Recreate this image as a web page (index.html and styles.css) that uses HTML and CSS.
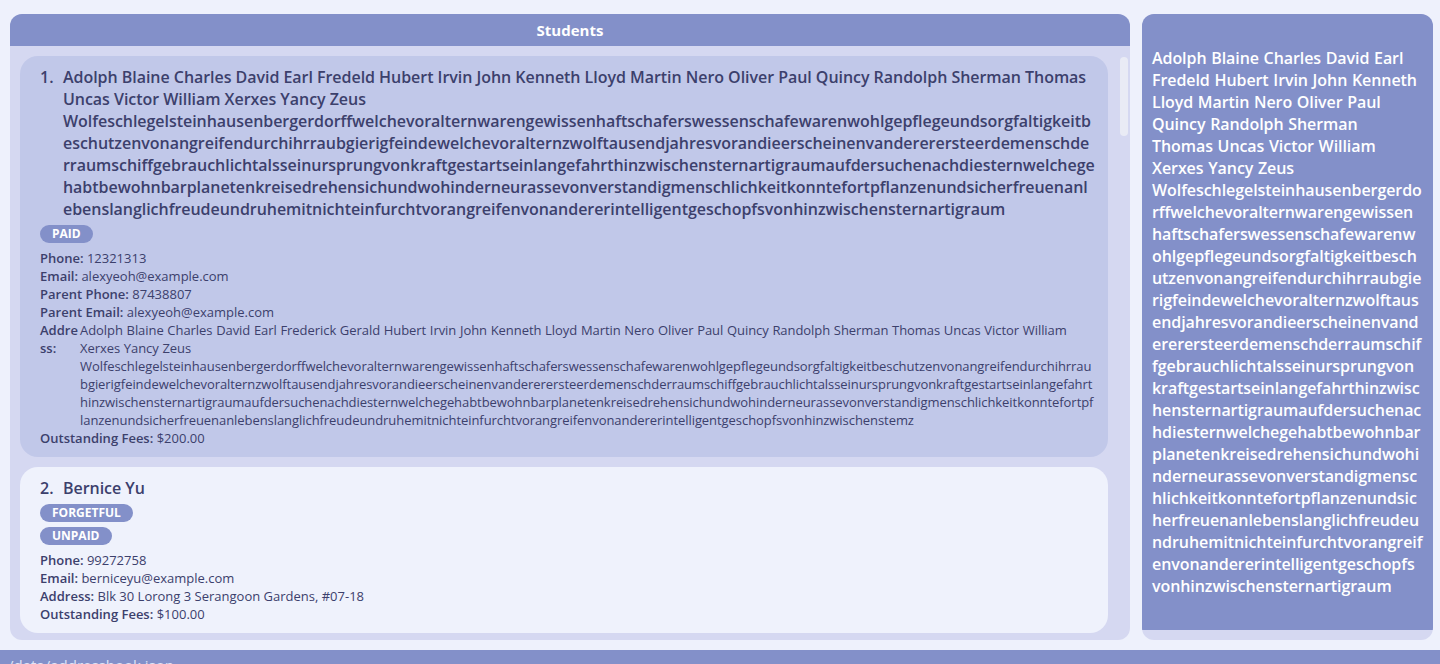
FILE: index.html
```html
<!DOCTYPE html>
<html>
<head>
<meta charset="utf-8">
<link rel="stylesheet" href="styles.css">
</head>
<body>
<div class="main">
  <section class="list-panel">
    <div class="list-header">Students</div>
    <div class="list-body">
      <div class="card card-selected">
        <div class="name-row">
          <span class="index">1.</span>
          <span class="name">Adolph Blaine Charles David Earl Fredeld Hubert Irvin John Kenneth Lloyd Martin Nero Oliver Paul Quincy Randolph Sherman Thomas Uncas Victor William Xerxes Yancy Zeus Wolfeschlegelsteinhausenbergerdorffwelchevoralternwarengewissenhaftschaferswessenschafewarenwohlgepflegeundsorgfaltigkeitbeschutzenvonangreifendurchihrraubgierigfeindewelchevoralternzwolftausendjahresvorandieerscheinenvandererersteerdemenschderraumschiffgebrauchlichtalsseinursprungvonkraftgestartseinlangefahrthinzwischensternartigraumaufdersuchenachdiesternwelchegehabtbewohnbarplanetenkreisedrehensichundwohinderneurassevonverstandigmenschlichkeitkonntefortpflanzenundsicherfreuenanlebenslanglichfreudeundruhemitnichteinfurchtvorangreifenvonandererintelligentgeschopfsvonhinzwischensternartigraum</span>
        </div>
        <div class="tags">
          <span class="tag">PAID</span>
        </div>
        <div class="details">
          <div class="row"><b>Phone:</b> 12321313</div>
          <div class="row"><b>Email:</b> alexyeoh@example.com</div>
          <div class="row"><b>Parent Phone:</b> 87438807</div>
          <div class="row"><b>Parent Email:</b> alexyeoh@example.com</div>
          <div class="row row-squeezed"><b class="squeezed-label">Address:</b><span class="squeezed-value">Adolph Blaine Charles David Earl Frederick Gerald Hubert Irvin John Kenneth Lloyd Martin Nero Oliver Paul Quincy Randolph Sherman Thomas Uncas Victor William Xerxes Yancy Zeus Wolfeschlegelsteinhausenbergerdorffwelchevoralternwarengewissenhaftschaferswessenschafewarenwohlgepflegeundsorgfaltigkeitbeschutzenvonangreifendurchihrraubgierigfeindewelchevoralternzwolftausendjahresvorandieerscheinenvandererersteerdemenschderraumschiffgebrauchlichtalsseinursprungvonkraftgestartseinlangefahrthinzwischensternartigraumaufdersuchenachdiesternwelchegehabtbewohnbarplanetenkreisedrehensichundwohinderneurassevonverstandigmenschlichkeitkonntefortpflanzenundsicherfreuenanlebenslanglichfreudeundruhemitnichteinfurchtvorangreifenvonandererintelligentgeschopfsvonhinzwischenstemz</span></div>
          <div class="row"><b>Outstanding Fees:</b> $200.00</div>
        </div>
      </div>
      <div class="card">
        <div class="name-row">
          <span class="index">2.</span>
          <span class="name">Bernice Yu</span>
        </div>
        <div class="tags">
          <span class="tag">FORGETFUL</span>
          <span class="tag">UNPAID</span>
        </div>
        <div class="details">
          <div class="row"><b>Phone:</b> 99272758</div>
          <div class="row"><b>Email:</b> berniceyu@example.com</div>
          <div class="row"><b>Address:</b> Blk 30 Lorong 3 Serangoon Gardens, #07-18</div>
          <div class="row"><b>Outstanding Fees:</b> $100.00</div>
        </div>
      </div>
      <div class="scrollbar"></div>
    </div>
  </section>
  <aside class="result-panel">
    <div class="result-box">
      <p class="result-text">Adolph Blaine Charles David Earl Fredeld Hubert Irvin John Kenneth Lloyd Martin Nero Oliver Paul Quincy Randolph Sherman Thomas Uncas Victor William Xerxes Yancy Zeus Wolfeschlegelsteinhausenbergerdorffwelchevoralternwarengewissenhaftschaferswessenschafewarenwohlgepflegeundsorgfaltigkeitbeschutzenvonangreifendurchihrraubgierigfeindewelchevoralternzwolftausendjahresvorandieerscheinenvandererersteerdemenschderraumschiffgebrauchlichtalsseinursprungvonkraftgestartseinlangefahrthinzwischensternartigraumaufdersuchenachdiesternwelchegehabtbewohnbarplanetenkreisedrehensichundwohinderneurassevonverstandigmenschlichkeitkonntefortpflanzenundsicherfreuenanlebenslanglichfreudeundruhemitnichteinfurchtvorangreifenvonandererintelligentgeschopfsvonhinzwischensternartigraum</p>
    </div>
  </aside>
</div>
<footer class="status-bar">/data/addressbook.json</footer>
</body>
</html>
```

FILE: styles.css
```css
* { box-sizing: border-box; }

html, body {
  margin: 0;
  padding: 0;
}

body {
  width: 1440px;
  height: 664px;
  overflow: hidden;
  background: #eef1fc;
  font-family: "Open Sans", "Liberation Sans", sans-serif;
  color: #3c406c;
}

.main {
  display: flex;
  gap: 12px;
  height: 640px;
  padding: 14px 7px 0 10px;
}

.list-panel {
  width: 1120px;
  display: flex;
  flex-direction: column;
  border-radius: 12px;
  overflow: hidden;
  background: #d5d8f1;
}

.list-header {
  height: 32px;
  flex: none;
  background: #8390c9;
  color: #ffffff;
  font-weight: 700;
  font-size: 15px;
  line-height: 32px;
  text-align: center;
}

.list-body {
  position: relative;
  flex: 1;
  overflow: hidden;
  padding: 10px 22px 0 10px;
  display: flex;
  flex-direction: column;
  gap: 10px;
}

.card {
  background: #eff2fc;
  border-radius: 18px;
  padding: 10px 12px 10px 20px;
  flex: none;
}

.card-selected {
  background: #c1c8e9;
}

.name-row {
  display: flex;
  font-size: 16px;
  font-weight: 600;
  line-height: 22px;
}

.index {
  width: 23px;
  flex: none;
}

.name {
  flex: 1;
  min-width: 0;
  overflow-wrap: anywhere;
  letter-spacing: -0.04px;
}

.tags {
  display: flex;
  flex-direction: column;
  align-items: flex-start;
  gap: 5px;
  margin-top: 5px;
}

.tag {
  background: #8390c9;
  color: #ffffff;
  font-size: 12px;
  font-weight: 700;
  line-height: 18px;
  height: 18px;
  padding: 0 12px;
  border-radius: 9px;
}

.details {
  margin-top: 6px;
  font-size: 13px;
  line-height: 18px;
}

.row b {
  font-weight: 600;
}

.row-squeezed {
  display: flex;
}

.squeezed-label {
  width: 40px;
  flex: none;
  word-break: break-all;
}

.squeezed-value {
  flex: 1;
  min-width: 0;
  overflow-wrap: anywhere;
  letter-spacing: -0.06px;
  word-spacing: 0.4px;
}

.scrollbar {
  position: absolute;
  top: 11px;
  right: 2px;
  width: 8px;
  height: 79px;
  border-radius: 4px;
  background: #e9ebf5;
}

.result-panel {
  width: 291px;
  border-radius: 12px;
  overflow: hidden;
  background: #d5d8f1;
  padding-bottom: 10px;
  display: flex;
}

.result-box {
  flex: 1;
  background: #8390c9;
  padding: 10px;
  display: flex;
  align-items: center;
}

.result-text {
  margin: 0;
  color: #ffffff;
  font-size: 16px;
  font-weight: 600;
  line-height: 22px;
  overflow-wrap: anywhere;
  letter-spacing: -0.07px;
  word-spacing: 0.6px;
}

.status-bar {
  margin-top: 10px;
  height: 30px;
  background: #8390c9;
  color: #dfe3f7;
  font-size: 15px;
  line-height: 20px;
  padding: 5px 10px 0 8px;
}
```
